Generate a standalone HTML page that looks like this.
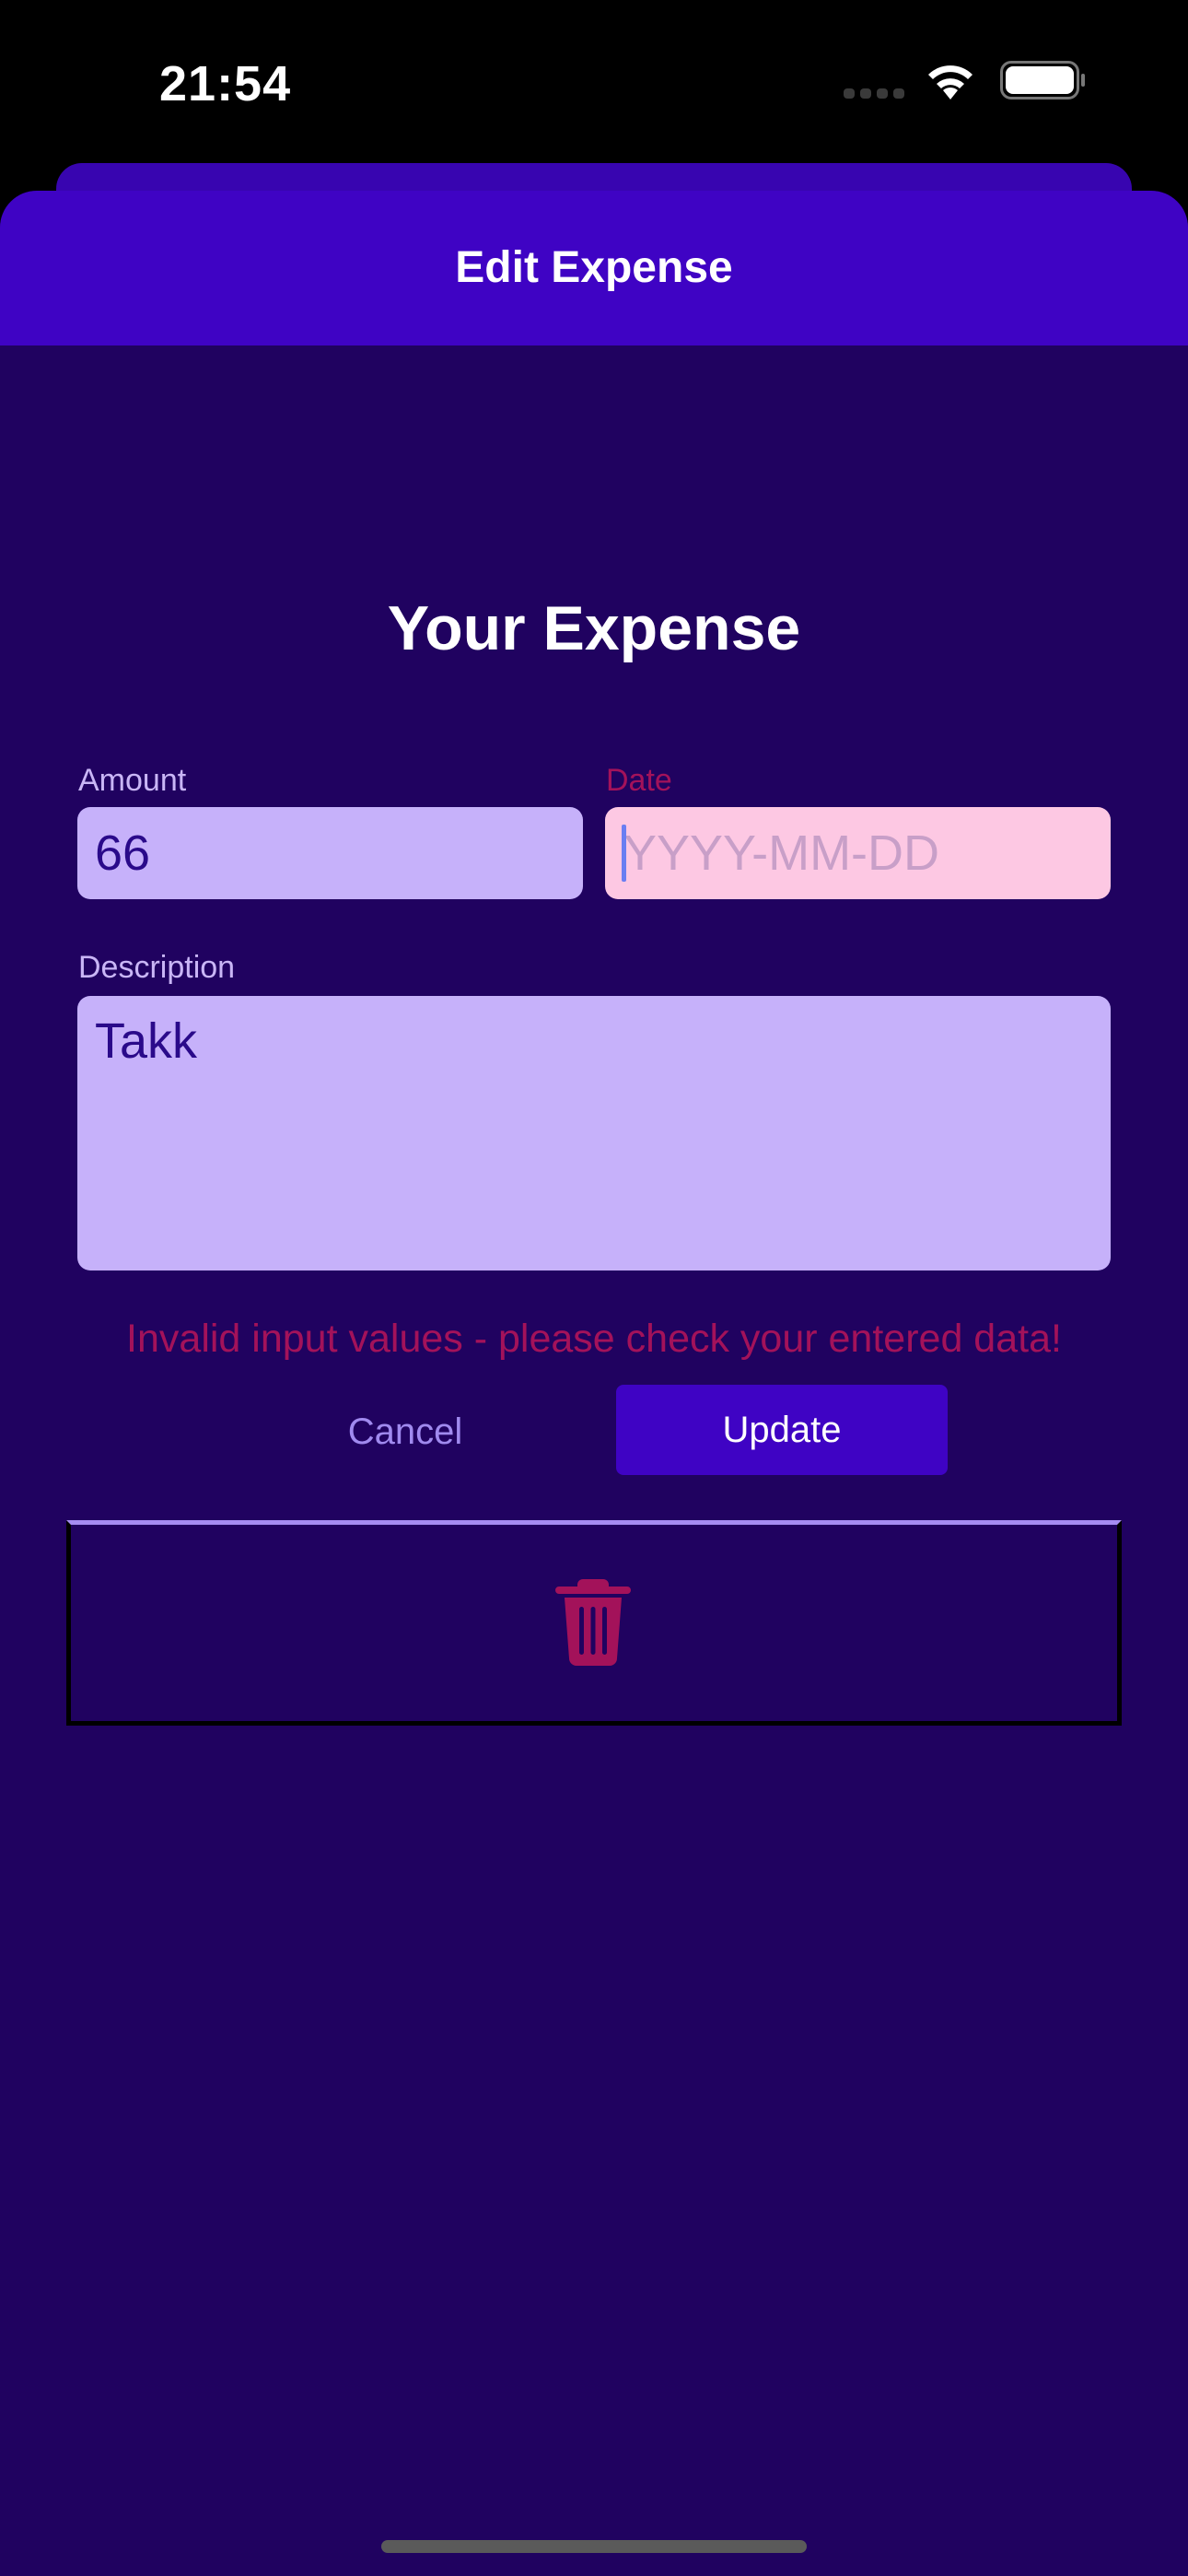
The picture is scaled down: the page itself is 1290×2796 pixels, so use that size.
<!DOCTYPE html>
<html><head><meta charset="utf-8"><style>
*{margin:0;padding:0;box-sizing:border-box}
body{width:1290px;height:2796px;background:#000;font-family:"Liberation Sans",sans-serif;position:relative;overflow:hidden}
.a{position:absolute}
</style></head><body>
<div class="a" style="left:173px;top:60px;font-size:54px;font-weight:600;color:#fff;letter-spacing:1px">21:54</div>
<div class="a" style="left:916px;top:96px;width:12px;height:11px;border-radius:4px;background:#3a3a3a"></div>
<div class="a" style="left:934px;top:96px;width:12px;height:11px;border-radius:4px;background:#3a3a3a"></div>
<div class="a" style="left:952px;top:96px;width:12px;height:11px;border-radius:4px;background:#3a3a3a"></div>
<div class="a" style="left:970px;top:96px;width:12px;height:11px;border-radius:4px;background:#3a3a3a"></div>
<svg class="a" style="left:1002px;top:64px" width="60" height="44" viewBox="0 0 60 44"><path d="M30 44 L22 34 A12 12 0 0 1 38 34 Z" fill="#fff"/><path d="M15 27 A22 22 0 0 1 45 27 L40 32 A15 15 0 0 0 20 32Z" fill="#fff"/><path d="M6 17 A34 34 0 0 1 54 17 L49 22 A27 27 0 0 0 11 22Z" fill="#fff"/></svg>
<div class="a" style="left:1086px;top:66px;width:86px;height:42px;border:3px solid #777;border-radius:12px"></div>
<div class="a" style="left:1092px;top:72px;width:74px;height:30px;background:#fff;border-radius:8px"></div>
<div class="a" style="left:1174px;top:80px;width:4px;height:14px;background:#777;border-radius:2px"></div>
<div class="a" style="left:61px;top:177px;width:1168px;height:80px;background:#3805b0;border-radius:28px 28px 0 0"></div>
<div class="a" style="left:0;top:207px;width:1290px;height:2589px;background:#200260;border-radius:40px 40px 0 0;overflow:hidden">
<div style="height:168px;background:#3f03c4;text-align:center;color:#fff;font-size:48px;font-weight:600;line-height:168px">Edit Expense</div>
</div>
<div class="a" style="left:0;top:643px;width:1290px;text-align:center;color:#fff;font-size:68px;font-weight:700">Your Expense</div>
<div class="a" style="left:85px;top:828px;color:#c9b6f6;font-size:34px">Amount</div>
<div class="a" style="left:658px;top:828px;color:#a3125a;font-size:34px">Date</div>
<div class="a" style="left:84px;top:876px;width:549px;height:100px;background:#c6b1fa;border-radius:14px;color:#2a0a8a;font-size:54px;line-height:100px;padding-left:19px">66</div>
<div class="a" style="left:657px;top:876px;width:549px;height:100px;background:#fdc8e3;border-radius:14px;color:#c89fc8;font-size:54px;line-height:100px;padding-left:20px">YYYY-MM-DD</div>
<div class="a" style="left:675px;top:895px;width:5px;height:62px;background:#6a7ef2;border-radius:2px"></div>
<div class="a" style="left:85px;top:1031px;color:#c9b6f6;font-size:34px">Description</div>
<div class="a" style="left:84px;top:1081px;width:1122px;height:298px;background:#c6b1fa;border-radius:14px;color:#2a0a8a;font-size:54px;padding:18px 0 0 19px">Takk</div>
<div class="a" style="left:0;top:1429px;width:1290px;text-align:center;color:#a3125a;font-size:43px">Invalid input values - please check your entered data!</div>
<div class="a" style="left:340px;top:1532px;width:200px;text-align:center;color:#a08aef;font-size:40px">Cancel</div>
<div class="a" style="left:669px;top:1503px;width:360px;height:98px;background:#3f03c4;border-radius:8px;color:#fff;font-size:40px;text-align:center;line-height:98px">Update</div>
<div class="a" style="left:72px;top:1650px;width:1146px;height:223px;border:5px solid #000;border-top:5px solid #a58cf2"></div>
<svg class="a" style="left:603px;top:1714px" width="82" height="94" viewBox="0 0 82 94"><path d="M30 0h22a6 6 0 0 1 6 6v2h20a4 4 0 0 1 0 8H4a4 4 0 0 1 0-8h20V6a6 6 0 0 1 6-6z" fill="#a3125a"/><path d="M10 20h62l-5 66a8 8 0 0 1-8 8H23a8 8 0 0 1-8-8z" fill="#a3125a"/><rect x="26" y="30" width="5" height="52" rx="2.5" fill="#200260"/><rect x="38.5" y="30" width="5" height="52" rx="2.5" fill="#200260"/><rect x="51" y="30" width="5" height="52" rx="2.5" fill="#200260"/></svg>
<div class="a" style="left:414px;top:2757px;width:462px;height:14px;background:#5a5a5a;border-radius:7px"></div>
</body></html>
